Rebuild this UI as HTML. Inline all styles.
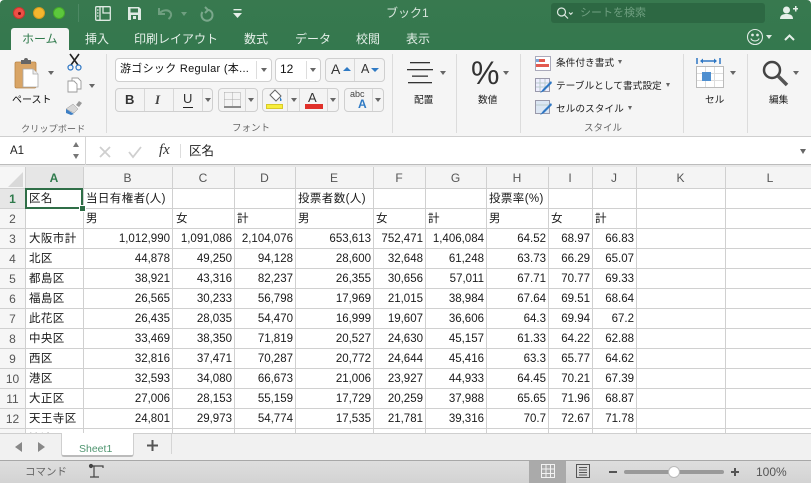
<!DOCTYPE html>
<html lang="ja"><head><meta charset="utf-8"><title>ブック1</title>
<style>
*{box-sizing:border-box}
html,body{margin:0;padding:0;width:811px;height:483px;overflow:hidden;background:#fff}
body{position:relative;font-family:"Liberation Sans","Noto Sans CJK JP",sans-serif;color:#222}
.a{position:absolute}
.t{position:absolute;white-space:nowrap;line-height:1}
.tab{position:absolute;top:31px;font-size:12px;color:#e4efe8;white-space:nowrap;line-height:16px}
.sep{position:absolute;top:54px;height:79px;width:1px;background:#dcdcdc}
.btn{position:absolute;background:#f4f4f4;border:1px solid #cfcfcf;border-radius:4px}
.tri{position:absolute;width:0;height:0;border-left:3px solid transparent;border-right:3px solid transparent;border-top:4px solid #666}
.lbl{position:absolute;font-size:9.2px;color:#666;white-space:nowrap;line-height:12px;margin-top:2px}
.rl{position:absolute;font-size:9.7px;color:#222;white-space:nowrap;line-height:12px;margin-top:2px}
.vl{position:absolute;top:167px;height:266px;width:1px;background:#d0d0d0}
.hl{position:absolute;left:0;width:636px;height:1px;background:#d0d0d0}
.ch{position:absolute;top:167px;height:21px;font-size:12px;color:#555;text-align:center;line-height:22px}
.rh{position:absolute;left:0;width:25px;height:20px;font-size:12px;color:#555;text-align:center;line-height:20px}
.c{position:absolute;height:20px;font-size:11.5px;line-height:20px;white-space:nowrap;color:#1a1a1a;letter-spacing:.4px}
.r{text-align:right;letter-spacing:0}
svg{position:absolute;overflow:visible}
</style></head><body>

<!-- title / tabs -->
<div class="a" style="left:0;top:0;width:811px;height:50px;background:linear-gradient(#38794f,#34784e);border-radius:4px 4px 0 0"></div>
<div class="a" style="left:13px;top:7px;width:12px;height:12px;border-radius:50%;background:#ee4f46;border:1px solid #c9362e"></div>
<div class="a" style="left:18px;top:12px;width:3px;height:3px;border-radius:50%;background:#6a120e"></div>
<div class="a" style="left:33px;top:7px;width:12px;height:12px;border-radius:50%;background:#f5b62e;border:1px solid #d59a20"></div>
<div class="a" style="left:53px;top:7px;width:12px;height:12px;border-radius:50%;background:#5cc83c;border:1px solid #45a82a"></div>
<div class="a" style="left:78px;top:4px;width:1px;height:18px;background:#4d8964"></div>
<svg style="left:95px;top:6px" width="16" height="15" viewBox="0 0 16 15" fill="none" stroke="#dfeae3" stroke-width="1.3"><rect x=".7" y=".7" width="14.6" height="13.6" rx="1"/><path d="M5 1v13M8 1v6h7"/><path d="M2 4h1.5M2 7h1.5M2 10h1.5" /></svg>
<svg style="left:127px;top:6px" width="15" height="15" viewBox="0 0 15 15"><path d="M1 1h11l2 2v11H1z" fill="#dfeae3"/><rect x="3.5" y="2.5" width="7.500" height="4" fill="#38794f"/><rect x="4" y="9" width="7" height="5" fill="#38794f"/><rect x="6" y="10" width="3" height="3" fill="#dfeae3"/></svg>
<svg style="left:157px;top:7px" width="16" height="13" viewBox="0 0 16 13" fill="none" stroke="#6f9f80" stroke-width="2"><path d="M2 1v6h6"/><path d="M2.500 6.500C5 3 11 2 13.500 5.500c1.500 2.500 0 5-2 6.500"/></svg>
<div class="tri" style="left:181px;top:12px;border-top-color:#6f9f80"></div>
<svg style="left:200px;top:6px" width="14" height="15" viewBox="0 0 14 15" fill="none" stroke="#7ba88c" stroke-width="2"><path d="M5 1l3 3-3 3" /><path d="M7 4C10 3.500 12.500 6 12.500 9a5.500 5.500 0 1 1-10 -3"/></svg>
<svg style="left:232px;top:9px" width="11" height="9" viewBox="0 0 11 9" fill="#e6efe9"><rect x="1.500" width="8" height="1.400"/><path d="M1 4h9L5.500 9z"/></svg>
<div class="t" style="left:386px;top:7px;font-size:12px;color:#d8e6dd">ブック1</div>
<div class="a" style="left:551px;top:3px;width:214px;height:20px;background:#2d6843;border-radius:3px"></div>
<svg style="left:556px;top:7px" width="18" height="13" viewBox="0 0 18 13" fill="none" stroke="#dfeae3" stroke-width="1.200"><circle cx="5.500" cy="5" r="4"/><path d="M8.500 8l3.500 3.500"/><path d="M13 5.500l1.800 1.800 1.800-1.800"/></svg>
<div class="t" style="left:580px;top:8px;font-size:11px;color:#6f9f80">シートを検索</div>
<svg style="left:780px;top:6px" width="18" height="14" viewBox="0 0 18 14" fill="#e6efe9"><circle cx="6.500" cy="4" r="3.500"/><path d="M0 13c0-4 3-5 6.500-5s6.500 1 6.500 5z"/><path d="M13 2h2V0h1.500v2H18v1.500h-1.500v2H15v-2h-2z"/></svg>
<svg style="left:746px;top:28px" width="18" height="18" viewBox="0 0 18 18" fill="none" stroke="#dfeae3" stroke-width="1.100"><circle cx="9" cy="9" r="7.500"/><path d="M4.800 10.500c1.500 3.200 6.900 3.200 8.400 0"/><circle cx="6.500" cy="7" r=".8" fill="#dfeae3"/><circle cx="11.500" cy="7" r=".8" fill="#dfeae3"/></svg>
<div class="tri" style="left:766px;top:35px;border-top-color:#dfeae3"></div>
<svg style="left:784px;top:34px" width="11" height="7" viewBox="0 0 11 7" fill="none" stroke="#e6efe9" stroke-width="2"><path d="M1 6l4.500-4.500L10 6"/></svg>

<div class="a" style="left:11px;top:28px;width:58px;height:23px;background:#f5f5f5;border-radius:3px 3px 0 0"></div>
<div class="tab" style="left:22px;color:#2f7a4c">ホーム</div>
<div class="tab" style="left:85px">挿入</div>
<div class="tab" style="left:134px">印刷レイアウト</div>
<div class="tab" style="left:244px">数式</div>
<div class="tab" style="left:295px">データ</div>
<div class="tab" style="left:356px">校閲</div>
<div class="tab" style="left:406px">表示</div>

<!-- ribbon -->
<div class="a" style="left:0;top:50px;width:811px;height:87px;background:#f5f5f5;border-bottom:1px solid #cfcfcf"></div>
<div class="sep" style="left:106px"></div><div class="sep" style="left:392px"></div><div class="sep" style="left:456px"></div><div class="sep" style="left:520px"></div><div class="sep" style="left:683px"></div><div class="sep" style="left:747px"></div>

<!-- clipboard -->
<svg style="left:15px;top:57px" width="24" height="31" viewBox="0 0 24 31"><rect x="0" y="5" width="21" height="26" rx="1.500" fill="#d9a566" stroke="#b98547" stroke-width=".8"/><path d="M6 5V3h3a2 2 0 0 1 4 0h3v4H6z" fill="#666"/><path d="M8 12h10l5 5v13H8z" fill="#fff" stroke="#aaa" stroke-width=".8"/><path d="M18 12v5h5" fill="#eee" stroke="#aaa" stroke-width=".8"/></svg>
<div class="tri" style="left:48px;top:71px"></div>
<div class="t" style="left:12px;top:96px;font-size:10px;color:#111">ペースト</div>
<svg style="left:67px;top:54px" width="15" height="17" viewBox="0 0 15 17" fill="none"><path d="M3 0l8 11M12 0L4 11" stroke="#222" stroke-width="1.600"/><circle cx="3.500" cy="13.500" r="2.500" stroke="#2f77c4" stroke-width="1.200"/><circle cx="11.500" cy="13.500" r="2.500" stroke="#2f77c4" stroke-width="1.200"/></svg>
<svg style="left:67px;top:77px" width="15" height="16" viewBox="0 0 15 16" fill="#fff" stroke="#999" stroke-width=".9"><path d="M5 1h6l3 3v8H5z"/><path d="M1 4h6l3 3v8H1z"/></svg>
<div class="tri" style="left:89px;top:84px"></div>
<svg style="left:66px;top:100px" width="17" height="15" viewBox="0 0 17 15"><path d="M10 5l3-4 3 2-3 4z" fill="#999"/><path d="M0 9l7-5 5 5-4 4z" fill="#d7d7d7" stroke="#999" stroke-width=".5"/><path d="M0 9l8 5-3 1-5-2z" fill="#3d7fc4"/></svg>
<div class="lbl" style="left:21px;top:121px">クリップボード</div>

<!-- font -->
<div class="a" style="left:115px;top:58px;width:157px;height:24px;background:#fff;border:1px solid #cfcfcf;border-radius:4px"></div>
<div class="a" style="left:256px;top:61px;width:1px;height:18px;background:#ddd"></div>
<div class="t" style="left:120px;top:64px;font-size:11px;color:#111;letter-spacing:.3px">游ゴシック Regular (本...</div>
<div class="tri" style="left:261px;top:68px"></div>
<div class="a" style="left:275px;top:58px;width:46px;height:24px;background:#fff;border:1px solid #cfcfcf;border-radius:4px"></div>
<div class="a" style="left:306px;top:61px;width:1px;height:18px;background:#ddd"></div>
<div class="t" style="left:280px;top:63px;font-size:12px;color:#111">12</div>
<div class="tri" style="left:310px;top:68px"></div>
<div class="btn" style="left:325px;top:58px;width:60px;height:24px"></div>
<div class="a" style="left:354px;top:59px;width:1px;height:22px;background:#d8d8d8"></div>
<div class="t" style="left:331px;top:62px;font-size:14px;color:#333">A</div>
<div class="tri" style="left:343px;top:67px;border-top:0;border-bottom:4px solid #2f7ac4;border-left-width:4px;border-right-width:4px"></div>
<div class="t" style="left:361px;top:63px;font-size:12.500px;color:#333">A</div>
<div class="tri" style="left:371px;top:68px;border-top-color:#2f7ac4;border-left-width:4px;border-right-width:4px"></div>

<div class="btn" style="left:115px;top:88px;width:98px;height:24px"></div>
<div class="a" style="left:144px;top:89px;width:1px;height:22px;background:#d8d8d8"></div>
<div class="a" style="left:173px;top:89px;width:1px;height:22px;background:#d8d8d8"></div>
<div class="a" style="left:202px;top:89px;width:1px;height:22px;background:#d8d8d8"></div>
<div class="t" style="left:125px;top:93px;font-size:13px;font-weight:bold;color:#333">B</div>
<div class="t" style="left:155px;top:93px;font-size:13px;font-style:italic;font-family:'Liberation Serif',serif;font-weight:bold;color:#444">I</div>
<div class="t" style="left:183px;top:92px;font-size:13px;color:#333">U</div>
<div class="a" style="left:183px;top:107px;width:10px;height:1px;background:#222"></div>
<div class="tri" style="left:205px;top:98px"></div>
<div class="btn" style="left:218px;top:88px;width:40px;height:24px"></div>
<div class="a" style="left:245px;top:89px;width:1px;height:22px;background:#d8d8d8"></div>
<svg style="left:224px;top:92px" width="17" height="16" viewBox="0 0 17 16" fill="none"><path d="M.5 .5h16M.5 7.500h16M.5 .5v13M8.500 .5v13M16.500 .5v13" stroke="#aaa" stroke-dasharray="1 1"/><path d="M0 15h17" stroke="#222" stroke-width="1"/></svg>
<div class="tri" style="left:248px;top:98px"></div>
<div class="btn" style="left:262px;top:88px;width:77px;height:24px"></div>
<div class="a" style="left:287px;top:89px;width:1px;height:22px;background:#d8d8d8"></div>
<div class="a" style="left:299px;top:89px;width:1px;height:22px;background:#d8d8d8"></div>
<div class="a" style="left:327px;top:89px;width:1px;height:22px;background:#d8d8d8"></div>
<svg style="left:267px;top:89px" width="16" height="14" viewBox="0 0 16 14"><path d="M8 1l6 6-5 5-6-6z" fill="#fff" stroke="#666"/><path d="M13 8c1 1.500 2 2.500 1.500 3.500s-2 .5-1.500-.5z" fill="#2f7ac4"/></svg>
<div class="a" style="left:266px;top:104px;width:17px;height:5px;background:#f7ee3c;border:1px solid #d8c92a"></div>
<div class="tri" style="left:291px;top:98px"></div>
<div class="t" style="left:308px;top:91px;font-size:13px;color:#333">A</div>
<div class="a" style="left:305px;top:104px;width:18px;height:5px;background:#e0302a"></div>
<div class="tri" style="left:330px;top:98px"></div>
<div class="btn" style="left:344px;top:88px;width:40px;height:24px"></div>
<div class="a" style="left:372px;top:89px;width:1px;height:22px;background:#d8d8d8"></div>
<div class="t" style="left:350px;top:90px;font-size:9px;color:#444">abc</div>
<div class="t" style="left:358px;top:98px;font-size:12px;font-weight:bold;color:#2f7ac4">A</div>
<div class="tri" style="left:375px;top:98px"></div>
<div class="lbl" style="left:232px;top:121px;font-size:9.500px">フォント</div>

<!-- align -->
<svg style="left:407px;top:62px" width="26" height="22" viewBox="0 0 26 22" fill="#333"><rect x="3" y="0" width="20" height="1.300"/><rect x="0" y="7" width="26" height="1.300"/><rect x="5" y="13.500" width="16" height="1.300"/><rect x="1" y="20" width="24" height="1.300"/></svg>
<div class="tri" style="left:440px;top:71px"></div>
<div class="rl" style="left:414px;top:93px">配置</div>
<!-- number -->
<div class="t" style="left:471px;top:57px;font-size:32px;color:#333">%</div>
<div class="tri" style="left:503px;top:71px"></div>
<div class="rl" style="left:478px;top:93px">数値</div>
<!-- styles -->
<svg style="left:535px;top:56px" width="16" height="15" viewBox="0 0 16 15"><rect x=".5" y=".5" width="15" height="14" fill="#fff" stroke="#aab"/><rect x="1" y="3" width="6" height="3" fill="#7ba7d8"/><rect x="1" y="8" width="13" height="3" fill="#e35a4f"/><rect x="4" y="3" width="6" height="3" fill="#e35a4f"/></svg>
<svg style="left:535px;top:78px" width="17" height="16" viewBox="0 0 17 16"><rect x=".5" y=".5" width="14" height="13" fill="#eef" stroke="#99a"/><path d="M5 1v12M10 1v12M1 5h13M1 9h13" stroke="#bcc"/><path d="M16 3l-8 8-3 4 4-2 8-8z" fill="#2f77c4"/></svg>
<svg style="left:535px;top:100px" width="17" height="16" viewBox="0 0 17 16"><rect x=".5" y=".5" width="14" height="13" fill="#dbe6f3" stroke="#99a"/><path d="M1 5h13" stroke="#bcc"/><path d="M16 3l-8 8-3 4 4-2 8-8z" fill="#2f77c4"/></svg>
<div class="rl" style="left:556px;top:56px">条件付き書式</div><div class="tri" style="left:618px;top:60px;border-left-width:2.500px;border-right-width:2.500px"></div>
<div class="rl" style="left:556px;top:79px">テーブルとして書式設定</div><div class="tri" style="left:666px;top:83px;border-left-width:2.500px;border-right-width:2.500px"></div>
<div class="rl" style="left:556px;top:102px">セルのスタイル</div><div class="tri" style="left:628px;top:106px;border-left-width:2.500px;border-right-width:2.500px"></div>
<div class="lbl" style="left:584px;top:121px;font-size:9.500px">スタイル</div>
<!-- cells -->
<svg style="left:696px;top:58px" width="28" height="30" viewBox="0 0 28 30"><path d="M1 0v6M24 0v6M5 3h15" stroke="#2f77c4" stroke-width="1.500" fill="none"/><path d="M4 3l3-2.500v5zM21 3l-3-2.500v5z" fill="#2f77c4"/><rect x=".5" y="8.500" width="27" height="21" fill="#fff" stroke="#bbb"/><path d="M9.500 9v20M18.500 9v20M1 15.500h26M1 22.500h26" stroke="#ddd"/><rect x="6" y="14" width="9" height="9" fill="#4f8fd0"/></svg>
<div class="tri" style="left:730px;top:71px"></div>
<div class="rl" style="left:705px;top:93px">セル</div>
<!-- edit -->
<svg style="left:762px;top:60px" width="27" height="27" viewBox="0 0 27 27" fill="none"><circle cx="10" cy="10" r="8" stroke="#444" stroke-width="2.500"/><path d="M16 16l9 9" stroke="#555" stroke-width="3.500"/></svg>
<div class="tri" style="left:793px;top:71px"></div>
<div class="rl" style="left:769px;top:93px">編集</div>

<!-- formula bar -->
<div class="a" style="left:0;top:137px;width:811px;height:28px;background:#fff;border-bottom:1px solid #bcbcbc"></div>
<div class="a" style="left:0;top:165px;width:811px;height:2px;background:#e8e8e8"></div>
<div class="a" style="left:85px;top:137px;width:1px;height:28px;background:#d5d5d5"></div>
<div class="a" style="left:180px;top:144px;width:1px;height:14px;background:#ddd"></div>
<div class="t" style="left:10px;top:146px;font-size:11.500px;color:#222">A1</div>
<div class="tri" style="left:73px;top:142px;border-top:0;border-bottom:5px solid #777"></div>
<div class="tri" style="left:73px;top:154px;border-top:5px solid #777"></div>
<svg style="left:99px;top:146px" width="12" height="12" fill="none" stroke="#cfcfcf" stroke-width="1.800"><path d="M1 1l10 10M11 1L1 11"/></svg>
<svg style="left:128px;top:146px" width="14" height="12" fill="none" stroke="#cfcfcf" stroke-width="1.800"><path d="M1 6l4 5 8-10"/></svg>
<div class="t" style="left:159px;top:143px;font-size:15px;font-style:italic;font-family:'Liberation Serif',serif;color:#333">fx</div>
<div class="t" style="left:189px;top:145px;font-size:12.500px;color:#222">区名</div>
<div class="tri" style="left:800px;top:149px;border-left-width:3.500px;border-right-width:3.500px;border-top-width:5px"></div>

<!-- column headers -->
<div class="a" style="left:0;top:167px;width:811px;height:21px;background:#f4f4f4"></div>
<div class="a" style="left:0;top:167px;width:25px;height:266px;background:#f6f6f6"></div>
<div class="a" style="left:25px;top:167px;width:58px;height:21px;background:#e6e6e6"></div>
<div class="a" style="left:0;top:188px;width:25px;height:21px;background:#e6e6e6"></div>
<svg style="left:8px;top:172px" width="15" height="15"><path d="M15 0v15H0z" fill="#d9d9d9"/></svg>
<div class="a" style="left:25px;top:188px;width:786px;height:245px;background:#fff"></div>

<div class="hl" style="top:188px;width:811px"></div>
<div class="hl" style="top:208px;width:811px"></div><div class="hl" style="top:228px;width:811px"></div><div class="hl" style="top:248px;width:811px"></div><div class="hl" style="top:268px;width:811px"></div><div class="hl" style="top:288px;width:811px"></div><div class="hl" style="top:308px;width:811px"></div><div class="hl" style="top:328px;width:811px"></div><div class="hl" style="top:348px;width:811px"></div><div class="hl" style="top:368px;width:811px"></div><div class="hl" style="top:388px;width:811px"></div><div class="hl" style="top:408px;width:811px"></div><div class="hl" style="top:428px;width:811px"></div>
<div class="vl" style="left:25px"></div><div class="vl" style="left:83px"></div><div class="vl" style="left:172px"></div><div class="vl" style="left:234px"></div><div class="vl" style="left:295px"></div><div class="vl" style="left:373px"></div><div class="vl" style="left:425px"></div><div class="vl" style="left:486px"></div><div class="vl" style="left:548px"></div><div class="vl" style="left:592px"></div><div class="vl" style="left:636px"></div><div class="vl" style="left:725px"></div>

<div class="ch" style="left:25px;width:58px;color:#2f7a4c;font-weight:bold">A</div><div class="ch" style="left:83px;width:89px">B</div><div class="ch" style="left:172px;width:62px">C</div><div class="ch" style="left:234px;width:61px">D</div><div class="ch" style="left:295px;width:78px">E</div><div class="ch" style="left:373px;width:52px">F</div><div class="ch" style="left:425px;width:61px">G</div><div class="ch" style="left:486px;width:62px">H</div><div class="ch" style="left:548px;width:44px">I</div><div class="ch" style="left:592px;width:44px">J</div><div class="ch" style="left:636px;width:89px">K</div><div class="ch" style="left:725px;width:90px">L</div>

<div class="rh" style="top:189px;color:#2f7a4c;font-weight:bold">1</div><div class="rh" style="top:209px">2</div><div class="rh" style="top:229px">3</div><div class="rh" style="top:249px">4</div><div class="rh" style="top:269px">5</div><div class="rh" style="top:289px">6</div><div class="rh" style="top:309px">7</div><div class="rh" style="top:329px">8</div><div class="rh" style="top:349px">9</div><div class="rh" style="top:369px">10</div><div class="rh" style="top:389px">11</div><div class="rh" style="top:409px">12</div><div class="rh" style="top:429px;opacity:.45">13</div>

<!-- cells text -->
<div class="c" style="left:29px;top:189px">区名</div><div class="c" style="left:86px;top:189px">当日有権者(人)</div><div class="c" style="left:298px;top:189px">投票者数(人)</div><div class="c" style="left:489px;top:189px">投票率(%)</div>
<div class="c" style="left:86px;top:209px">男</div><div class="c" style="left:176px;top:209px">女</div><div class="c" style="left:237px;top:209px">計</div><div class="c" style="left:298px;top:209px">男</div><div class="c" style="left:376px;top:209px">女</div><div class="c" style="left:428px;top:209px">計</div><div class="c" style="left:489px;top:209px">男</div><div class="c" style="left:551px;top:209px">女</div><div class="c" style="left:595px;top:209px">計</div>

<div class="c" style="left:29px;top:229px">大阪市計</div><div class="c r" style="right:641px;top:229px">1,012,990</div><div class="c r" style="right:579px;top:229px">1,091,086</div><div class="c r" style="right:518px;top:229px">2,104,076</div><div class="c r" style="right:440px;top:229px">653,613</div><div class="c r" style="right:388px;top:229px">752,471</div><div class="c r" style="right:327px;top:229px">1,406,084</div><div class="c r" style="right:265px;top:229px">64.52</div><div class="c r" style="right:221px;top:229px">68.97</div><div class="c r" style="right:177px;top:229px">66.83</div>
<div class="c" style="left:29px;top:249px">北区</div><div class="c r" style="right:641px;top:249px">44,878</div><div class="c r" style="right:579px;top:249px">49,250</div><div class="c r" style="right:518px;top:249px">94,128</div><div class="c r" style="right:440px;top:249px">28,600</div><div class="c r" style="right:388px;top:249px">32,648</div><div class="c r" style="right:327px;top:249px">61,248</div><div class="c r" style="right:265px;top:249px">63.73</div><div class="c r" style="right:221px;top:249px">66.29</div><div class="c r" style="right:177px;top:249px">65.07</div>
<div class="c" style="left:29px;top:269px">都島区</div><div class="c r" style="right:641px;top:269px">38,921</div><div class="c r" style="right:579px;top:269px">43,316</div><div class="c r" style="right:518px;top:269px">82,237</div><div class="c r" style="right:440px;top:269px">26,355</div><div class="c r" style="right:388px;top:269px">30,656</div><div class="c r" style="right:327px;top:269px">57,011</div><div class="c r" style="right:265px;top:269px">67.71</div><div class="c r" style="right:221px;top:269px">70.77</div><div class="c r" style="right:177px;top:269px">69.33</div>
<div class="c" style="left:29px;top:289px">福島区</div><div class="c r" style="right:641px;top:289px">26,565</div><div class="c r" style="right:579px;top:289px">30,233</div><div class="c r" style="right:518px;top:289px">56,798</div><div class="c r" style="right:440px;top:289px">17,969</div><div class="c r" style="right:388px;top:289px">21,015</div><div class="c r" style="right:327px;top:289px">38,984</div><div class="c r" style="right:265px;top:289px">67.64</div><div class="c r" style="right:221px;top:289px">69.51</div><div class="c r" style="right:177px;top:289px">68.64</div>
<div class="c" style="left:29px;top:309px">此花区</div><div class="c r" style="right:641px;top:309px">26,435</div><div class="c r" style="right:579px;top:309px">28,035</div><div class="c r" style="right:518px;top:309px">54,470</div><div class="c r" style="right:440px;top:309px">16,999</div><div class="c r" style="right:388px;top:309px">19,607</div><div class="c r" style="right:327px;top:309px">36,606</div><div class="c r" style="right:265px;top:309px">64.3</div><div class="c r" style="right:221px;top:309px">69.94</div><div class="c r" style="right:177px;top:309px">67.2</div>
<div class="c" style="left:29px;top:329px">中央区</div><div class="c r" style="right:641px;top:329px">33,469</div><div class="c r" style="right:579px;top:329px">38,350</div><div class="c r" style="right:518px;top:329px">71,819</div><div class="c r" style="right:440px;top:329px">20,527</div><div class="c r" style="right:388px;top:329px">24,630</div><div class="c r" style="right:327px;top:329px">45,157</div><div class="c r" style="right:265px;top:329px">61.33</div><div class="c r" style="right:221px;top:329px">64.22</div><div class="c r" style="right:177px;top:329px">62.88</div>
<div class="c" style="left:29px;top:349px">西区</div><div class="c r" style="right:641px;top:349px">32,816</div><div class="c r" style="right:579px;top:349px">37,471</div><div class="c r" style="right:518px;top:349px">70,287</div><div class="c r" style="right:440px;top:349px">20,772</div><div class="c r" style="right:388px;top:349px">24,644</div><div class="c r" style="right:327px;top:349px">45,416</div><div class="c r" style="right:265px;top:349px">63.3</div><div class="c r" style="right:221px;top:349px">65.77</div><div class="c r" style="right:177px;top:349px">64.62</div>
<div class="c" style="left:29px;top:369px">港区</div><div class="c r" style="right:641px;top:369px">32,593</div><div class="c r" style="right:579px;top:369px">34,080</div><div class="c r" style="right:518px;top:369px">66,673</div><div class="c r" style="right:440px;top:369px">21,006</div><div class="c r" style="right:388px;top:369px">23,927</div><div class="c r" style="right:327px;top:369px">44,933</div><div class="c r" style="right:265px;top:369px">64.45</div><div class="c r" style="right:221px;top:369px">70.21</div><div class="c r" style="right:177px;top:369px">67.39</div>
<div class="c" style="left:29px;top:389px">大正区</div><div class="c r" style="right:641px;top:389px">27,006</div><div class="c r" style="right:579px;top:389px">28,153</div><div class="c r" style="right:518px;top:389px">55,159</div><div class="c r" style="right:440px;top:389px">17,729</div><div class="c r" style="right:388px;top:389px">20,259</div><div class="c r" style="right:327px;top:389px">37,988</div><div class="c r" style="right:265px;top:389px">65.65</div><div class="c r" style="right:221px;top:389px">71.96</div><div class="c r" style="right:177px;top:389px">68.87</div>
<div class="c" style="left:29px;top:409px">天王寺区</div><div class="c r" style="right:641px;top:409px">24,801</div><div class="c r" style="right:579px;top:409px">29,973</div><div class="c r" style="right:518px;top:409px">54,774</div><div class="c r" style="right:440px;top:409px">17,535</div><div class="c r" style="right:388px;top:409px">21,781</div><div class="c r" style="right:327px;top:409px">39,316</div><div class="c r" style="right:265px;top:409px">70.7</div><div class="c r" style="right:221px;top:409px">72.67</div><div class="c r" style="right:177px;top:409px">71.78</div>

<!-- row 13: only the clipped tops show, values are not legible in the reference -->
<div class="c" style="left:29px;top:429px;opacity:.45">浪速区</div><div class="c r" style="right:641px;top:429px;opacity:.3">00,000</div><div class="c r" style="right:579px;top:429px;opacity:.3">00,000</div><div class="c r" style="right:518px;top:429px;opacity:.3">00,000</div><div class="c r" style="right:440px;top:429px;opacity:.3">00,000</div><div class="c r" style="right:388px;top:429px;opacity:.3">00,000</div><div class="c r" style="right:327px;top:429px;opacity:.3">00,000</div><div class="c r" style="right:265px;top:429px;opacity:.3">00.00</div><div class="c r" style="right:221px;top:429px;opacity:.3">00.00</div><div class="c r" style="right:177px;top:429px;opacity:.3">00.00</div>

<!-- selection -->
<div class="a" style="left:25px;top:188px;width:58px;height:21px;border:2px solid #2f6e47"></div>
<div class="a" style="left:80px;top:206px;width:5px;height:5px;background:#2f6e47;border:1px solid #fff;box-sizing:content-box;margin:-1px"></div>

<!-- sheet tabs -->
<div class="a" style="left:0;top:433px;width:811px;height:28px;background:#f1f1f1;border-top:1px solid #cfcfcf"></div>
<div class="tri" style="left:15px;top:442px;border:0;border-top:5px solid transparent;border-bottom:5px solid transparent;border-right:7px solid #888"></div>
<div class="tri" style="left:38px;top:442px;border:0;border-top:5px solid transparent;border-bottom:5px solid transparent;border-left:7px solid #888"></div>
<div class="a" style="left:61px;top:433px;width:73px;height:24px;background:#fff;border:1px solid #cfcfcf;border-top:0;border-radius:0 0 3px 3px;border-bottom:2px solid #bbb"></div>
<div class="t" style="left:79px;top:444px;font-size:10.500px;color:#4f9570">Sheet1</div>
<svg style="left:147px;top:440px" width="11" height="11" fill="#555"><rect x="4.500" width="2" height="11"/><rect y="4.500" width="11" height="2"/></svg>
<div class="a" style="left:171px;top:434px;width:1px;height:20px;background:#d5d5d5"></div>

<!-- status -->
<div class="a" style="left:0;top:460px;width:811px;height:23px;background:linear-gradient(#dedede,#d3d3d3);border-top:1px solid #a8a8a8"></div>
<div class="t" style="left:25px;top:467px;font-size:10.500px;color:#666">コマンド</div>
<svg style="left:88px;top:463px" width="17" height="17" viewBox="0 0 17 17" fill="none" stroke="#444" stroke-width="1.200"><path d="M4 3h11v2M6 3v11M2 14h9"/><circle cx="3" cy="3" r="1.500" fill="#444"/></svg>
<div class="a" style="left:529px;top:461px;width:37px;height:22px;background:#aaa"></div>
<svg style="left:541px;top:464px" width="14" height="14" fill="none" stroke="#f2f2f2"><path d="M.5 .5h13v13H.5zM5 0v14M9.500 0v14M0 5h14M0 9.500h14"/></svg>
<svg style="left:576px;top:464px" width="14" height="14" fill="none" stroke="#555"><rect x=".5" y=".5" width="13" height="13"/><path d="M3 3.500h8M3 6h8M3 8.500h8M3 11h8"/></svg>
<div class="a" style="left:609px;top:471px;width:8px;height:2px;background:#555"></div>
<div class="a" style="left:624px;top:470px;width:100px;height:4px;background:#9a9a9a;border-radius:2px"></div>
<div class="a" style="left:668px;top:466px;width:12px;height:12px;border-radius:50%;background:#fff;border:1px solid #bbb"></div>
<svg style="left:731px;top:468px" width="8" height="8" fill="#555"><rect x="3" width="2" height="8"/><rect y="3" width="8" height="2"/></svg>
<div class="t" style="left:756px;top:466px;font-size:12px;color:#555">100%</div>
</body></html>
